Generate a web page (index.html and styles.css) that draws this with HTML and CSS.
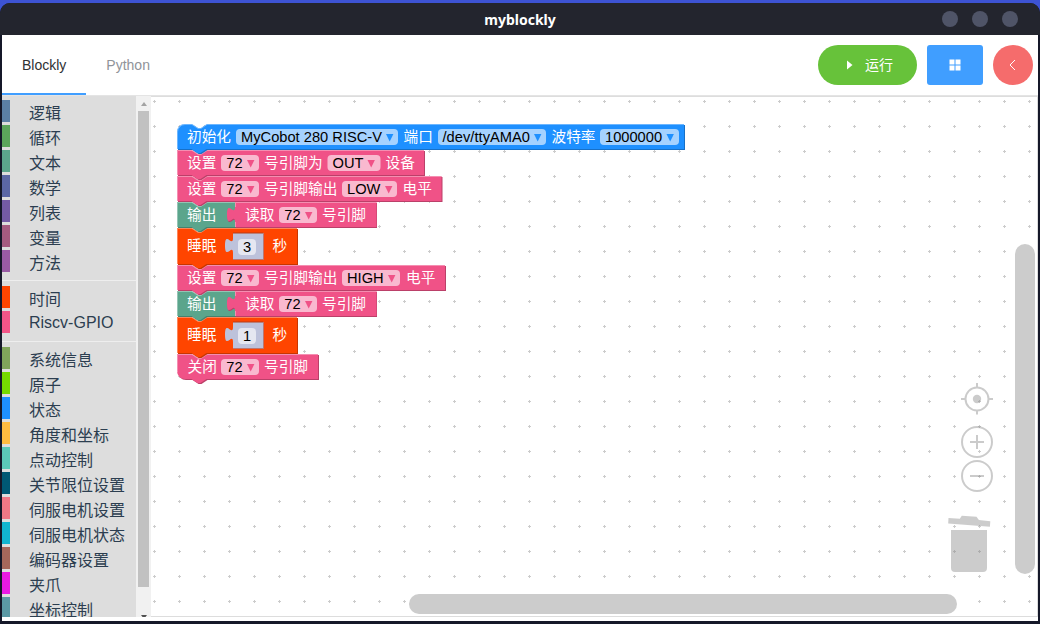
FILE: index.html
```html
<!DOCTYPE html>
<html lang="zh-CN">
<head>
<meta charset="utf-8">
<title>myblockly</title>
<link rel="stylesheet" href="styles.css">
</head>
<body>
<div class="window">
  <header class="titlebar">
    <span class="title">myblockly</span>
    <div class="controls"><i></i><i></i><i></i></div>
  </header>
  <main class="app">
    <div class="topbar">
      <nav class="tabs"><a class="tab active">Blockly</a><a class="tab">Python</a></nav>
      <div class="actions">
        <button class="btn run"><svg width="14" height="14" viewBox="0 0 14 14"><path d="M5 2.4 10.5 7 5 11.6Z" fill="#fff"/></svg><span>运行</span></button>
        <button class="btn grid"><svg width="14" height="14" viewBox="0 0 14 14"><path d="M1.5 1.5h5v5h-5zM7.5 1.5h5v5h-5zM1.5 7.500h5v5h-5zM7.500 7.500h5v5h-5z" fill="#fff"/></svg></button>
        <button class="btn back"><svg width="14" height="14" viewBox="0 0 14 14"><path d="M9 2 4 7l5 5" fill="none" stroke="#fff"/></svg></button>
      </div>
    </div>
    <div class="editor">
      <aside class="toolbox">
        <ul class="list">
          <li class="c-logic">逻辑</li><li class="c-loop">循环</li><li class="c-text">文本</li><li class="c-math">数学</li><li class="c-list">列表</li><li class="c-var">变量</li><li class="c-func">方法</li>
          <li class="sep"></li>
          <li class="c-time">时间</li><li class="c-gpio">Riscv-GPIO</li>
          <li class="sep"></li>
          <li class="c-sys">系统信息</li><li class="c-atom">原子</li><li class="c-state">状态</li><li class="c-angle">角度和坐标</li><li class="c-jog">点动控制</li><li class="c-joint">关节限位设置</li><li class="c-servo">伺服电机设置</li><li class="c-servost">伺服电机状态</li><li class="c-enc">编码器设置</li><li class="c-grip">夹爪</li><li class="c-coord">坐标控制</li>
        </ul>
        <div class="scroll"><i class="up"></i><i class="thumb"></i><i class="down"></i></div>
      </aside>
      <div class="workspace">
        <svg class="canvas" width="886" height="519" viewBox="151 97 886 519">
          <defs>
            <pattern id="dots" x="142" y="89" width="25" height="25" patternUnits="userSpaceOnUse"><path d="M11 12.5h3M12.5 11v3" stroke="#ccc"/></pattern>
            <path id="arrow" d="M0 0h7.4L3.7 7.6Z"/>
            <path id="b1" d="M0 8A8 8 0 0 1 8 0H15l6 4h3l6-4H507v25H29.5l-6 4h-3l-6-4H0Z"/>
            <path id="b2" d="M0 0H15l6 4h3l6-4H247v25H29.5l-6 4h-3l-6-4H0Z"/>
            <path id="b3" d="M0 0H15l6 4h3l6-4H264.500v25H29.5l-6 4h-3l-6-4H0Z"/>
            <path id="b6" d="M0 0H15l6 4h3l6-4H268v25H29.5l-6 4h-3l-6-4H0Z"/>
            <path id="bp" d="M0 0H15l6 4h3l6-4H58v25H29.5l-6 4h-3l-6-4H0Z"/>
            <path id="br" d="M0 0H141.500v25H0V20c0-10-8 8-8-7.500s8 2.500 8-7.500Z"/>
            <path id="bs" d="M0 0H15l6 4h3l6-4H120v36H29.500l-6 4h-3l-6-4H0Z"/>
            <path id="bn" d="M0 0H30v26H0V20c0-10-8 8-8-7.500s8 2.500 8-7.500Z"/>
            <path id="b9" d="M0 0H15l6 4h3l6-4H141v25H29.500l-6 4h-3l-6-4H8a8 8 0 0 1-8-8Z"/>
          </defs>
          <path d="M151 97H1037V616H151Z" fill="url(#dots)"/>

          <g transform="translate(177 354)">
            <use href="#b9" class="dk pink" x="1" y="1"/><use href="#b9" class="pink"/><path class="lt" d="M.5 18V.5H15l6 4h3l6-4H141"/>
            <text x="10.500" y="18">关闭</text><rect class="f" x="44" y="5" width="38" height="16" rx="4"/><text class="v" x="49.300" y="18">72</text><use href="#arrow" class="pink" x="70" y="10"/><text x="87" y="18">号引脚</text>
          </g>
          <g transform="translate(177 317)">
            <use href="#bs" class="dk orange" x="1" y="1"/><use href="#bs" class="orange"/><path class="lt" d="M.5 36V.5H15l6 4h3l6-4H120"/>
            <text x="10" y="23">睡眠</text><g transform="translate(56 5)"><use href="#bn" class="num"/><path class="edge" d="M0 26.500H30.500V0"/><path class="in" d="M0 0H30"/></g>
            <rect class="f" x="61" y="11" width="18" height="16" rx="4"/><text class="v" x="66" y="24">1</text><text x="95.500" y="23">秒</text>
          </g>
          <g transform="translate(177 291)">
            <use href="#bp" class="dk teal" x="1" y="1"/><use href="#bp" class="teal"/><path class="lt" d="M.5 25V.5H15l6 4h3l6-4H58"/><text x="10" y="18">输出</text>
            <g transform="translate(58 0)"><use href="#br" class="dk pink" x=".5" y="1"/><use href="#br" class="pink"/><path class="lt" d="M.5 25V20M.5 5V.5H141"/><text x="10" y="18">读取</text><rect class="f" x="44" y="5" width="38" height="16" rx="4"/><text class="v" x="49.300" y="18">72</text><use href="#arrow" class="pink" x="70" y="10"/><text x="87" y="18">号引脚</text></g>
          </g>
          <g transform="translate(177 265)">
            <use href="#b6" class="dk pink" x="1" y="1"/><use href="#b6" class="pink"/><path class="lt" d="M.5 25V.5H15l6 4h3l6-4H268"/>
            <text x="10" y="18">设置</text><rect class="f" x="44" y="5" width="38" height="16" rx="4"/><text class="v" x="49.300" y="18">72</text><use href="#arrow" class="pink" x="70" y="10"/><text x="87" y="18">号引脚输出</text><rect class="f" x="165" y="5" width="58" height="16" rx="4"/><text class="v" x="170" y="18">HIGH</text><use href="#arrow" class="pink" x="211" y="10"/><text x="229" y="18">电平</text>
          </g>
          <g transform="translate(177 228)">
            <use href="#bs" class="dk orange" x="1" y="1"/><use href="#bs" class="orange"/><path class="lt" d="M.5 36V.5H15l6 4h3l6-4H120"/>
            <text x="10" y="23">睡眠</text><g transform="translate(56 5)"><use href="#bn" class="num"/><path class="edge" d="M0 26.500H30.500V0"/><path class="in" d="M0 0H30"/></g>
            <rect class="f" x="61" y="11" width="18" height="16" rx="4"/><text class="v" x="66" y="24">3</text><text x="95.500" y="23">秒</text>
          </g>
          <g transform="translate(177 202)">
            <use href="#bp" class="dk teal" x="1" y="1"/><use href="#bp" class="teal"/><path class="lt" d="M.5 25V.5H15l6 4h3l6-4H58"/><text x="10" y="18">输出</text>
            <g transform="translate(58 0)"><use href="#br" class="dk pink" x=".5" y="1"/><use href="#br" class="pink"/><path class="lt" d="M.5 25V20M.5 5V.5H141"/><text x="10" y="18">读取</text><rect class="f" x="44" y="5" width="38" height="16" rx="4"/><text class="v" x="49.300" y="18">72</text><use href="#arrow" class="pink" x="70" y="10"/><text x="87" y="18">号引脚</text></g>
          </g>
          <g transform="translate(177 176)">
            <use href="#b3" class="dk pink" x="1" y="1"/><use href="#b3" class="pink"/><path class="lt" d="M.5 25V.5H15l6 4h3l6-4H264"/>
            <text x="10" y="18">设置</text><rect class="f" x="44" y="5" width="38" height="16" rx="4"/><text class="v" x="49.300" y="18">72</text><use href="#arrow" class="pink" x="70" y="10"/><text x="87" y="18">号引脚输出</text><rect class="f" x="165" y="5" width="55" height="16" rx="4"/><text class="v" x="170" y="18">LOW</text><use href="#arrow" class="pink" x="208" y="10"/><text x="225.500" y="18">电平</text>
          </g>
          <g transform="translate(177 150)">
            <use href="#b2" class="dk pink" x="1" y="1"/><use href="#b2" class="pink"/><path class="lt" d="M.5 25V.5H15l6 4h3l6-4H247"/>
            <text x="10" y="18">设置</text><rect class="f" x="44" y="5" width="38" height="16" rx="4"/><text class="v" x="49.300" y="18">72</text><use href="#arrow" class="pink" x="70" y="10"/><text x="87" y="18">号引脚为</text><rect class="f" x="150.500" y="5" width="53" height="16" rx="4"/><text class="v" x="155.500" y="18">OUT</text><use href="#arrow" class="pink" x="190.500" y="10"/><text x="208.500" y="18">设备</text>
          </g>
          <g transform="translate(177 124)">
            <use href="#b1" class="dk blue" x="1" y="1"/><use href="#b1" class="blue"/><path class="lt" d="M.5 25V8A7.500 7.500 0 0 1 8 .5H15l6 4h3l6-4H507"/>
            <text x="10" y="18">初始化</text><rect class="f" x="59" y="5" width="162" height="16" rx="4"/><text class="v" x="64" y="18" textLength="141">MyCobot 280 RISC-V</text><use href="#arrow" class="blue" x="209" y="10"/><text x="226.500" y="18">端口</text><rect class="f" x="261" y="5" width="108" height="16" rx="4"/><text class="v" x="265.500" y="18" textLength="87.500">/dev/ttyAMA0</text><use href="#arrow" class="blue" x="357" y="10"/><text x="374.500" y="18">波特率</text><rect class="f" x="423" y="5" width="79" height="16" rx="4"/><text class="v" x="428" y="18">1000000</text><use href="#arrow" class="blue" x="489.500" y="10"/>
          </g>

          <g class="tool">
            <circle cx="977" cy="399" r="11.500"/><circle class="solid" cx="977" cy="399" r="4.200"/><path d="M977 383v4M977 410.500v4M961 399h4M989 399h4"/>
            <circle cx="977" cy="442" r="15"/><path d="M970 442h14M977 435v14"/>
            <circle cx="977" cy="476" r="15"/><path d="M970 476h14"/>
            <path class="solid" d="M948.500 518l11.300.8 2-3 14.700.9 2.400 3.400 11.400 1.200-.4 5.400-41.700-3.200ZM951 530h36v38a4 4 0 0 1-4 4h-28a4 4 0 0 1-4-4Z"/>
          </g>
          <rect class="bar" x="1015" y="244" width="20" height="330" rx="10"/>
          <rect class="bar" x="409" y="594" width="548" height="20" rx="10"/>
        </svg>
      </div>
    </div>
  </main>
</div>
</body>
</html>
```
FILE: styles.css
```css
* { box-sizing: border-box; }
body { margin: 0; width: 1040px; height: 624px; overflow: hidden; background: #3d53d3; font-family: "Liberation Sans", "Noto Sans CJK SC", sans-serif; }
.window { margin-top: 3px; height: 621px; padding: 0 2px 3px; background: #151829; border-radius: 10px 10px 0 0; overflow: hidden; }
.titlebar { height: 32px; margin: 0 -2px; padding: 0 22px; display: grid; grid-template-columns: 1fr auto 1fr; align-items: center; background: #23252e; }
.title { grid-column: 2; color: #fff; font: bold 14px "Noto Sans", sans-serif; }
.controls { display: flex; gap: 14px; justify-content: flex-end; }
.controls i { width: 16px; height: 16px; border-radius: 50%; background: #4f5467; }
.app { height: 586px; background: #fff; }
.topbar { height: 61px; display: flex; justify-content: space-between; border-bottom: 1px solid #e4e4e4; }
.tabs { display: flex; }
.tab { height: 60px; padding: 0 20px; font-size: 14px; line-height: 60px; color: #909399; }
.tab.active { color: #303133; border-bottom: 2px solid #409eff; }
.actions { display: flex; gap: 10px; padding: 10px 5px; }
.btn { height: 40px; border: 0; padding: 0; display: flex; align-items: center; justify-content: center; color: #fff; font: 14px "Liberation Sans", "Noto Sans CJK SC", sans-serif; }
.btn span { padding-bottom: 2px; }
.run { width: 99px; gap: 9px; border-radius: 20px; background: #67c23a; }
.grid { width: 56px; border-radius: 3px; background: #409eff; }
.back { width: 40px; border-radius: 50%; background: #f56c6c; }
.editor { height: 521px; display: flex; }
.toolbox { width: 149px; display: flex; background: #ddd; overflow: hidden; }
.list { width: 134px; height: 521px; margin: 0; padding: 4px 0 0; list-style: none; overflow: hidden; display: flex; flex-direction: column; gap: 3px; font-size: 16px; color: #2c3e50; white-space: nowrap; }
.list li { flex: none; height: 22px; padding: 3px 0 0 19px; line-height: 22px; border-left: 8px solid; border-image: linear-gradient(var(--c), var(--c)) 1; }
.list .sep { height: 1px; margin: 5px 0 2px; padding: 0; border: 0; border-image: none; background: #eee; }
.c-logic { --c: #5b80a5; }
.c-loop { --c: #5ba55b; }
.c-text { --c: #5ba58c; }
.c-math { --c: #5b67a5; }
.c-list { --c: #745ba5; }
.c-var { --c: #a55b80; }
.c-func { --c: #995ba5; }
.c-time { --c: #ff4500; }
.list .c-gpio { --c: #f35588; padding-top: 1px; }
.c-sys { --c: #80a55b; }
.c-atom { --c: #76da00; }
.c-state { --c: #1e90ff; }
.c-angle { --c: #ffbb40; }
.c-jog { --c: #5bc8b8; }
.c-joint { --c: #005874; }
.c-servo { --c: #f07886; }
.c-servost { --c: #12b5d0; }
.c-enc { --c: #a5675b; }
.c-grip { --c: #e91ae4; }
.c-coord { --c: #5b99a5; }
.scroll { width: 15px; height: 521px; display: flex; flex-direction: column; align-items: center; background: #f1f1f1; overflow: hidden; }
.scroll i { flex: none; }
.up { border: 3.5px solid transparent; border-top: 0; border-bottom: 4px solid #a3a3a3; margin: 6px 0 5px; }
.thumb { width: 11px; height: 476px; background: #c1c1c1; }
.down { border: 3.5px solid transparent; border-bottom: 0; border-top: 4px solid #505050; margin-top: 28px; }
.workspace { width: 887px; height: 521px; border: solid #ddd; border-width: 1px 1px 1px 0; background: #fff; }
.canvas { display: block; }
.canvas text { font-size: 14.67px; fill: #fff; }
.canvas .v { fill: #000; }
.f { fill: #fff; fill-opacity: .6; }
.pink { fill: #f05287; }
.blue { fill: #1e90ff; }
.teal { fill: #5ba58c; }
.orange { fill: #ff4500; }
.num { fill: #bdc2db; }
.dk { filter: brightness(.78); }
.lt { fill: none; stroke: #fff; stroke-opacity: .35; }
.edge { fill: none; stroke: #8c9ac0; stroke-opacity: .6; }
.in { fill: none; stroke: #b63d18; }
.tool { fill: none; stroke: #808080; stroke-width: 2; opacity: .4; }
.tool .solid { fill: #808080; stroke: none; }
.bar { fill: #ccc; }
```
